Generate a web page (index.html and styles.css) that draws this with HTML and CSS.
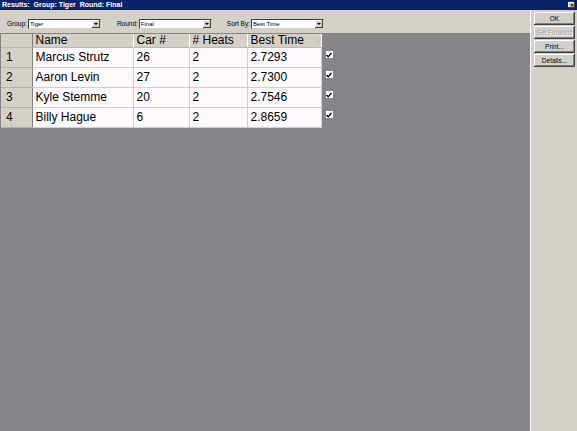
FILE: index.html
```html
<!DOCTYPE html>
<html>
<head>
<meta charset="utf-8">
<link rel="stylesheet" href="styles.css">
</head>
<body>
<div class="window">
  <div class="titlebar">
    <span class="title">Results:&nbsp; Group: Tiger&nbsp; Round: Final</span>
    <span class="close">&#x2715;</span>
  </div>
  <div class="body">
    <div class="left">
      <div class="toolbar">
        <label class="lbl">Group:</label>
        <div class="select"><span class="val">Tiger</span><span class="arrow"></span></div>
        <label class="lbl l2">Round:</label>
        <div class="select"><span class="val">Final</span><span class="arrow"></span></div>
        <label class="lbl l3">Sort By:</label>
        <div class="select"><span class="val">Best Time</span><span class="arrow"></span></div>
      </div>
      <div class="workspace">
        <div class="gridwrap">
          <table class="grid">
            <colgroup>
              <col class="w-rh"><col class="w-name"><col class="w-car"><col class="w-heats"><col class="w-best">
            </colgroup>
            <thead>
              <tr>
                <th class="rh"></th>
                <th>Name</th>
                <th>Car #</th>
                <th># Heats</th>
                <th>Best Time<span class="sort">&#x25B3;</span></th>
              </tr>
            </thead>
            <tbody>
              <tr><td class="rh">1</td><td>Marcus Strutz</td><td>26</td><td>2</td><td>2.7293</td></tr>
              <tr><td class="rh">2</td><td>Aaron Levin</td><td>27</td><td>2</td><td>2.7300</td></tr>
              <tr><td class="rh">3</td><td>Kyle Stemme</td><td>20</td><td>2</td><td>2.7546</td></tr>
              <tr><td class="rh">4</td><td>Billy Hague</td><td>6</td><td>2</td><td>2.8659</td></tr>
            </tbody>
          </table>
          <div class="checks">
            <span class="cb"><svg width="6" height="6" viewBox="0 0 6 6"><path d="M0.5 3 L2.2 4.8 L5.5 0.8" fill="none" stroke="#000" stroke-width="1.3"/></svg></span>
            <span class="cb"><svg width="6" height="6" viewBox="0 0 6 6"><path d="M0.5 3 L2.2 4.8 L5.5 0.8" fill="none" stroke="#000" stroke-width="1.3"/></svg></span>
            <span class="cb"><svg width="6" height="6" viewBox="0 0 6 6"><path d="M0.5 3 L2.2 4.8 L5.5 0.8" fill="none" stroke="#000" stroke-width="1.3"/></svg></span>
            <span class="cb"><svg width="6" height="6" viewBox="0 0 6 6"><path d="M0.5 3 L2.2 4.8 L5.5 0.8" fill="none" stroke="#000" stroke-width="1.3"/></svg></span>
          </div>
        </div>
      </div>
    </div>
    <div class="side">
      <button class="btn">OK</button>
      <button class="btn disabled">Set Finalists</button>
      <button class="btn">Print...</button>
      <button class="btn">Details...</button>
    </div>
  </div>
</div>
</body>
</html>
```

FILE: styles.css
```css
html, body {
  margin: 0;
  padding: 0;
}
body {
  width: 577px;
  height: 431px;
  overflow: hidden;
  background: #d4d0c8;
  font-family: "Liberation Sans", Arial, sans-serif;
}
.window {
  width: 577px;
  height: 431px;
  display: flex;
  flex-direction: column;
}
.titlebar {
  height: 10px;
  background: #0a246a;
  display: flex;
  align-items: center;
  justify-content: space-between;
  padding: 0 2px 0 2px;
  flex: none;
}
.title {
  color: #fff;
  font-weight: bold;
  font-size: 7px;
  line-height: 10px;
}
.close {
  width: 7px;
  height: 6px;
  background: #d4d0c8;
  color: #000;
  font-size: 5px;
  font-weight: bold;
  line-height: 6px;
  text-align: center;
  box-shadow: inset -1px -1px #404040, inset 1px 1px #fff;
}
.body {
  flex: 1;
  display: flex;
  min-height: 0;
}
.left {
  width: 530px;
  flex: none;
  display: flex;
  flex-direction: column;
}
.toolbar {
  height: 23px;
  box-sizing: border-box;
  display: flex;
  align-items: flex-start;
  padding: 9px 0 0 7px;
  flex: none;
  color: #000;
}
.lbl {
  font-size: 6.5px;
  line-height: 10px;
  margin-right: 1px;
}
.l2 { margin-left: 16px; }
.l3 { margin-left: 15px; }
.select {
  width: 70px;
  height: 8px;
  background: #fff;
  display: flex;
  align-items: center;
  justify-content: space-between;
  border: 1px solid #d4d0c8;
  border-top-color: #404040;
  border-left-color: #404040;
  padding-left: 1px;
}
.val {
  font-size: 6px;
}
.arrow {
  width: 8px;
  height: 8px;
  background: #d4d0c8;
  box-shadow: inset -1px -1px #404040, inset 1px 1px #fff;
  position: relative;
}
.arrow::after {
  content: "";
  position: absolute;
  left: 2px;
  top: 3px;
  border-left: 2px solid transparent;
  border-right: 2px solid transparent;
  border-top: 2px solid #000;
}
.workspace {
  flex: 1;
  background: #858489;
  padding: 1px 0 0 1px;
}
.gridwrap {
  display: flex;
  align-items: flex-start;
}
.grid {
  border-collapse: collapse;
  table-layout: fixed;
  width: 320px;
  font-size: 12px;
  color: #000;
}
.w-rh { width: 31px; }
.w-name { width: 101px; }
.w-car { width: 56px; }
.w-heats { width: 58px; }
.w-best { width: 74px; }
.grid th {
  background: #d4d0c8;
  font-weight: normal;
  text-align: left;
  height: 13px;
  line-height: 13px;
  padding: 0 0 0 3px;
  border-right: 1px solid #ffffff;
  border-bottom: 1px solid #b8b8b8;
  font-size: 12px;
  white-space: nowrap;
  overflow: hidden;
}
.grid td {
  background: #fdf9fd;
  height: 19px;
  line-height: 19px;
  padding: 0 0 0 3px;
  border-right: 1px solid #cfcfcf;
  border-bottom: 1px solid #cfcfcf;
  white-space: nowrap;
  overflow: hidden;
}
.grid td.rh {
  background: #d4d0c8;
  border-right: 1px solid #808080;
  border-bottom: 1px solid #b0b0b0;
  padding-left: 5px;
}
.grid th.rh {
  border-right: 1px solid #808080;
}
.sort {
  font-size: 6px;
  color: #a0a0a0;
  margin-left: 11px;
  vertical-align: 2px;
}
.checks {
  display: flex;
  flex-direction: column;
  padding: 17px 0 0 4px;
  gap: 13px;
}
.cb {
  width: 7px;
  height: 7px;
  background: #fff;
  display: flex;
  align-items: center;
  justify-content: center;
}
.side {
  flex: 1;
  min-width: 0;
  border-left: 1px solid #fff;
  display: flex;
  flex-direction: column;
  align-items: flex-start;
  padding: 2px 0 0 3px;
  gap: 1px;
}
.btn {
  width: 41px;
  height: 13px;
  background: #d4d0c8;
  border: none;
  box-shadow: inset -1px -1px #404040, inset 1px 1px #fff, inset -2px -2px #808080;
  font-family: "Liberation Sans", Arial, sans-serif;
  font-size: 6.5px;
  color: #000;
  padding: 0;
  margin: 0;
  white-space: nowrap;
  overflow: hidden;
}
.btn.disabled {
  color: #a0a0a0;
  text-shadow: 1px 1px #fff;
}
```
